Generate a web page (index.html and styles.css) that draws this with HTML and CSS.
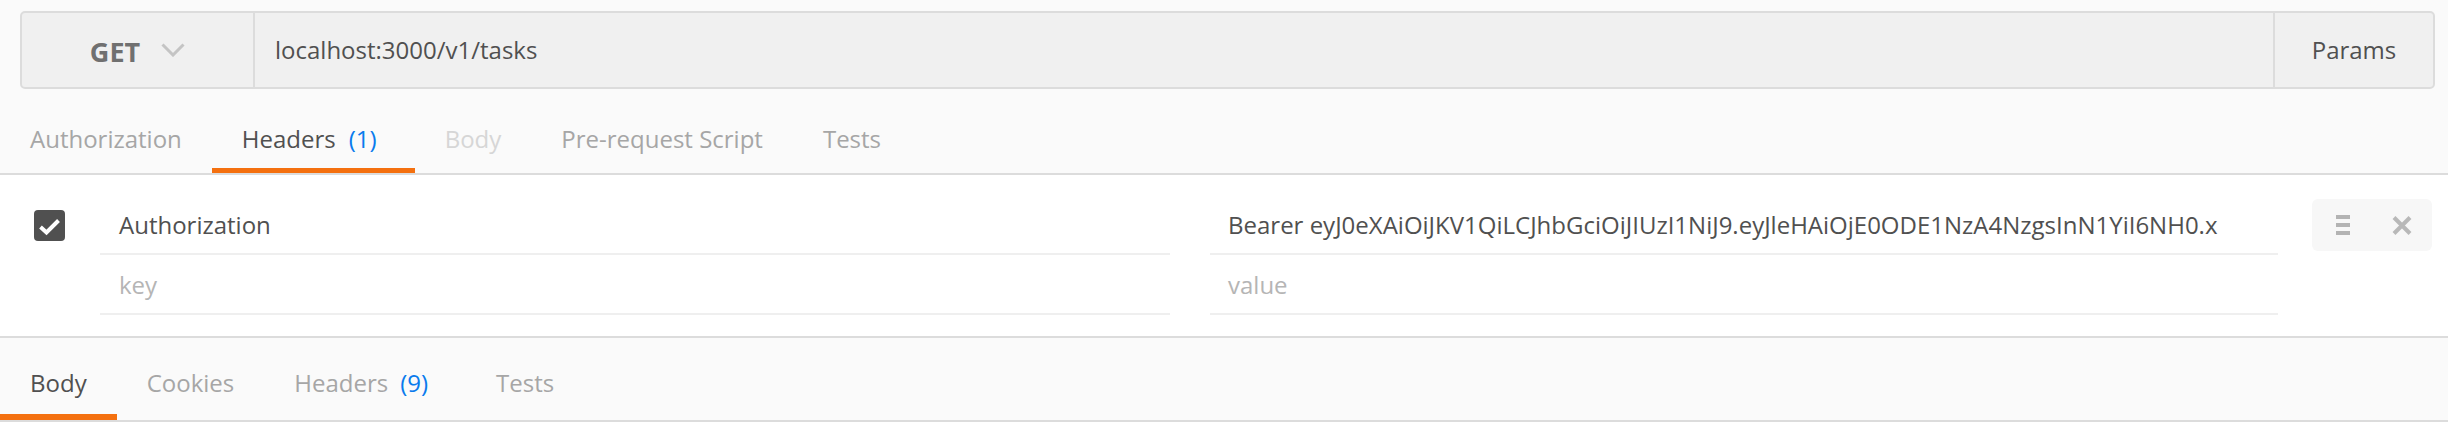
FILE: index.html
```html
<!DOCTYPE html>
<html lang="en">
<head>
<meta charset="utf-8">
<title>Request</title>
<link rel="stylesheet" href="styles.css">
</head>
<body>
<div class="request">
  <div class="url-row">
    <div class="url-bar">
      <div class="method">
        <span class="method-name">GET</span>
        <svg class="chevron" width="24" height="14" viewBox="0 0 24 14"><path d="M1.5 1.5 L12 12 L22.5 1.5" fill="none" stroke="#c4c4c4" stroke-width="3"/></svg>
      </div>
      <div class="url">localhost:3000/v1/tasks</div>
      <div class="params">Params</div>
    </div>
  </div>

  <div class="tabs">
    <div class="tab">Authorization</div>
    <div class="tab active">Headers<span class="count">(1)</span></div>
    <div class="tab disabled">Body</div>
    <div class="tab">Pre-request Script</div>
    <div class="tab">Tests</div>
  </div>

  <div class="headers">
    <div class="hrow">
      <div class="check-slot">
        <span class="checkbox">
          <svg width="31" height="31" viewBox="0 0 31 31"><path d="M6.5 17 L12.5 22.5 L24.5 10.5" fill="none" stroke="#ffffff" stroke-width="4"/></svg>
        </span>
      </div>
      <div class="cell key">Authorization</div>
      <div class="cell value">Bearer eyJ0eXAiOiJKV1QiLCJhbGciOiJIUzI1NiJ9.eyJleHAiOjE0ODE1NzA4NzgsInN1YiI6NH0.x</div>
      <div class="actions">
        <span class="actions-box">
          <svg width="14" height="20" viewBox="0 0 14 20"><rect x="0" y="0" width="14" height="4" fill="#b3b3b3"/><rect x="0" y="8" width="14" height="4" fill="#b3b3b3"/><rect x="0" y="16" width="14" height="4" fill="#b3b3b3"/></svg>
          <svg width="20" height="19" viewBox="0 0 20 19"><path d="M2 1.5 L18 17.5 M18 1.5 L2 17.5" fill="none" stroke="#b8b8b8" stroke-width="4"/></svg>
        </span>
      </div>
    </div>
    <div class="hrow">
      <div class="check-slot"></div>
      <div class="cell key placeholder">key</div>
      <div class="cell value placeholder">value</div>
      <div class="actions"></div>
    </div>
  </div>

  <div class="resp-tabs">
    <div class="rtab active">Body</div>
    <div class="rtab">Cookies</div>
    <div class="rtab">Headers<span class="count">(9)</span></div>
    <div class="rtab">Tests</div>
  </div>
  <div class="foot"></div>
</div>
</body>
</html>
```

FILE: styles.css
```css
html, body {
  margin: 0;
  padding: 0;
}
body {
  background: #ffffff;
  font-family: "Open Sans", "Noto Sans", "Liberation Sans", sans-serif;
  font-size: 24px;
  line-height: 32px;
  color: #505050;
}
.request {
  width: 2448px;
}
.url-row {
  background: #fafafa;
  padding: 11px 13px 0 20px;
}
.url-bar {
  display: flex;
  height: 74px;
  background: #f0f0f0;
  border: 2px solid #dcdcdc;
  border-radius: 5px;
}
.method {
  width: 231px;
  display: flex;
  align-items: center;
  justify-content: center;
  gap: 21px;
  border-right: 2px solid #dcdcdc;
}
.method-name {
  font-weight: 700;
  font-size: 27px;
  color: #707070;
  position: relative;
  top: 2px;
}
.chevron {
  display: block;
}
.url {
  flex: 1;
  display: flex;
  align-items: center;
  padding-left: 20px;
  color: #505050;
}
.params {
  width: 158px;
  display: flex;
  align-items: center;
  justify-content: center;
  border-left: 2px solid #dcdcdc;
  color: #505050;
}

.tabs {
  display: flex;
  background: #fafafa;
  border-bottom: 2px solid #dcdcdc;
}
.tab {
  padding: 34px 30px 13px;
  border-bottom: 5px solid transparent;
  color: #a6a6a6;
  white-space: nowrap;
}
.tab.active {
  color: #505050;
  border-bottom-color: #f4700f;
}
.tab.disabled {
  color: #d6d6d6;
}
.count {
  color: #097bed;
}
.tab .count {
  padding: 0 8px 0 13px;
}
.rtab .count {
  padding: 0 8px 0 12px;
}

.headers {
  background: #ffffff;
  padding: 20px 0 21px;
}
.hrow {
  display: flex;
  align-items: stretch;
  height: 60px;
}
.check-slot {
  width: 31px;
  margin: 0 35px 0 34px;
  display: flex;
  align-items: center;
}
.checkbox {
  display: block;
  width: 31px;
  height: 31px;
  background: #505050;
  border-radius: 4px;
}
.checkbox svg {
  display: block;
}
.cell {
  border-bottom: 2px solid #efefef;
  padding: 14px 0 12px 19px;
  white-space: nowrap;
  overflow: hidden;
  color: #505050;
}
.key {
  width: 1051px;
  margin-right: 40px;
}
.value {
  width: 1050px;
  margin-right: 34px;
  padding-left: 18px;
}
.placeholder {
  color: #b5b5b5;
}
.actions {
  width: 120px;
  display: flex;
  align-items: center;
}
.actions-box {
  width: 120px;
  height: 52px;
  background: #f7f7f7;
  border-radius: 6px;
  display: flex;
  align-items: center;
  justify-content: space-between;
  padding: 0 20px 0 24px;
  box-sizing: border-box;
}
.actions-box svg {
  display: block;
}

.resp-tabs {
  display: flex;
  background: #fafafa;
  border-top: 2px solid #dcdcdc;
  border-bottom: 2px solid #dcdcdc;
}
.rtab {
  padding: 29px 30px 15px;
  border-bottom: 6px solid transparent;
  color: #a6a6a6;
  white-space: nowrap;
}
.rtab.active {
  color: #505050;
  border-bottom-color: #f4700f;
}
.foot {
  height: 13px;
  background: #ffffff;
}
```
